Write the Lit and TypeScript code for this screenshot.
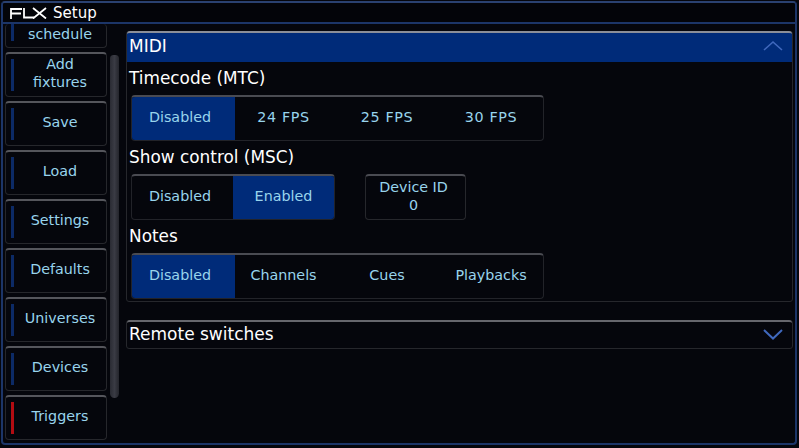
import { LitElement, html, css } from "lit";
import { customElement } from "lit/decorators.js";

const NAV = [
  { t: "schedule", cut: true },
  { t: "Add fixtures" },
  { t: "Save" },
  { t: "Load" },
  { t: "Settings" },
  { t: "Defaults" },
  { t: "Universes" },
  { t: "Devices" },
  { t: "Triggers", red: true },
];

@customElement("app-root")
export class AppRoot extends LitElement {
  static styles = css`
    :host {
      display: block;
      width: 799px;
      height: 448px;
      background: #05060c;
      font-family: "DejaVu Sans", sans-serif;
      color: #fff;
      overflow: hidden;
    }
    .win {
      box-sizing: border-box;
      height: 444px;
      margin: 1px 2px 0 1px;
      border: 2px solid #1c3568;
      border-radius: 4px;
      border-top-color: #2a4170;
      display: flex;
      flex-direction: column;
      overflow: hidden;
    }
    .title {
      flex: none;
      height: 19px;
      border-bottom: 2px solid #1c3568;
      display: flex;
      align-items: center;
      gap: 6px;
      padding-left: 7px;
      font-size: 15px;
      background: #030409;
    }
    .logo { display: block; }
    .body { flex: 1; display: flex; min-height: 0; }
    .side {
      flex: none;
      width: 104px;
      padding-left: 2px;
      box-sizing: border-box;
      height: 100%;
      overflow: hidden;
      display: flex;
      flex-direction: column;
      justify-content: flex-end;
      gap: 4px;
      padding-bottom: 3px;
    }
    .btn {
      flex: none;
      box-sizing: border-box;
      height: 45px;
      width: 102px;
      position: relative;
      border-radius: 4px;
      border: 1px solid #26272c;
      border-top: 2px solid #55565c;
      background: #05060c;
      color: #98d4ec;
      font-size: 14.3px;
      line-height: 18px;
      display: flex;
      align-items: center;
      justify-content: center;
      text-align: center;
      padding: 0 8px 4px 16px;
    }
    .btn::before {
      content: "";
      position: absolute;
      left: 5px;
      top: 5px;
      bottom: 5px;
      width: 3px;
      background: #0c2a66;
    }
    .btn.red::before { background: #b30c12; }
    .btn.cut { height: 24px; align-items: flex-end; padding-bottom: 4px; border-top: 0; }
    .cut::before { top: 0; bottom: 6px; }
    .scroll {
      flex: none;
      width: 9px;
      margin: 31px 0 45px 3px;
      background: linear-gradient(90deg, #2a2b33, #3a3b44 50%, #24252c);
      border-radius: 4px 4px 5px 5px;
    }
    .main {
      flex: 1;
      min-width: 0;
      padding: 7px 2px 0 7px;
      display: flex;
      flex-direction: column;
      gap: 18px;
    }
    .panel {
      box-sizing: border-box;
      border: 1px solid #26272c;
      border-radius: 3px;
      padding: 0 0 2px 0;
    }
    .panel.shut { padding: 0; }
    .head {
      box-sizing: content-box;
      height: 25px;
      background: #002b79;
      border-top: 2px solid #8b8f99;
      border-radius: 3px 3px 0 0;
      margin: -1px 0 0 0;
      display: flex;
      align-items: center;
      justify-content: space-between;
      padding: 0 9px 4px 2px;
      font-size: 17px;
    }
    .head.closed {
      background: transparent;
      border-top-color: #66676d;
      height: 24px;
      padding-bottom: 2px;
    }
    .lbl {
      height: 33px;
      box-sizing: border-box;
      display: flex;
      align-items: center;
      padding: 0 0 2px 2px;
      font-size: 16.9px;
    }
    .row { display: flex; gap: 30px; padding-left: 4px; }
    .seg {
      box-sizing: border-box;
      height: 46px;
      display: flex;
      border-radius: 4px;
      border: 1px solid #222329;
      border-top: 2px solid #4a4b52;
      overflow: hidden;
      background: #05060c;
    }
    .s {
      box-sizing: border-box;
      width: 104px;
      padding-bottom: 4px;
      display: flex;
      align-items: center;
      justify-content: center;
      color: #98d4ec;
      font-size: 14.3px;
    }
    .s.fps { letter-spacing: 0.6px; }
    .s:nth-child(1) { width: 103px; padding-right: 7px; }
    .s:nth-child(2) { width: 100px; padding-right: 3px; }
    .two .s:nth-child(1) { width: 101px; padding-right: 5px; }
    .two .s:nth-child(2) { width: 101px; padding-right: 0; }
    .s.on { background: #002b79; }
    .dev {
      box-sizing: border-box;
      width: 101px;
      height: 46px;
      border-radius: 4px;
      border: 1px solid #26272c;
      border-top: 2px solid #4a4b52;
      color: #98d4ec;
      font-size: 14.3px;
      line-height: 18px;
      text-align: center;
      display: flex;
      flex-direction: column;
      justify-content: center;
      padding: 0 4px 4px 0;
    }
  `;

  private seg(items: string[], on: number) {
    return html`<div class="seg ${items.length === 2 ? "two" : ""}">
      ${items.map(
        (t, i) => html`<div class="s ${i === on ? "on" : ""} ${t.endsWith("FPS") ? "fps" : ""}">${t}</div>`
      )}
    </div>`;
  }

  render() {
    return html`<div class="win">
      <div class="title">
        <svg class="logo" width="37" height="12" viewBox="0 0 37 12" fill="none" stroke="#fff" stroke-width="1.8">
          <path d="M1 12V2H12M1 6.5H11" />
          <path d="M14 1V10.5H24" />
          <path d="M23 1L36 11.5M36 1L23 11.5" />
        </svg>
        <span>Setup</span>
      </div>
      <div class="body">
        <div class="side">
          ${NAV.map(
            (n) => html`<div class="btn ${n.cut ? "cut" : ""} ${n.red ? "red" : ""}">${n.t}</div>`
          )}
        </div>
        <div class="scroll"></div>
        <div class="main">
          <div class="panel">
            <div class="head">
              <span>MIDI</span>
              <svg width="20" height="11" viewBox="0 0 20 11" fill="none" stroke="#3f68bd" stroke-width="1.6">
                <path d="M1 10L10 2L19 10" />
              </svg>
            </div>
            <div class="lbl">Timecode (MTC)</div>
            <div class="row">${this.seg(["Disabled", "24 FPS", "25 FPS", "30 FPS"], 0)}</div>
            <div class="lbl">Show control (MSC)</div>
            <div class="row">
              ${this.seg(["Disabled", "Enabled"], 1)}
              <div class="dev"><span>Device ID</span><span>0</span></div>
            </div>
            <div class="lbl">Notes</div>
            <div class="row">${this.seg(["Disabled", "Channels", "Cues", "Playbacks"], 0)}</div>
          </div>
          <div class="panel shut">
            <div class="head closed">
              <span>Remote switches</span>
              <svg width="20" height="11" viewBox="0 0 20 11" fill="none" stroke="#3f68bd" stroke-width="2">
                <path d="M1 1L10 9.5L19 1" />
              </svg>
            </div>
          </div>
        </div>
      </div>
    </div>`;
  }
}
